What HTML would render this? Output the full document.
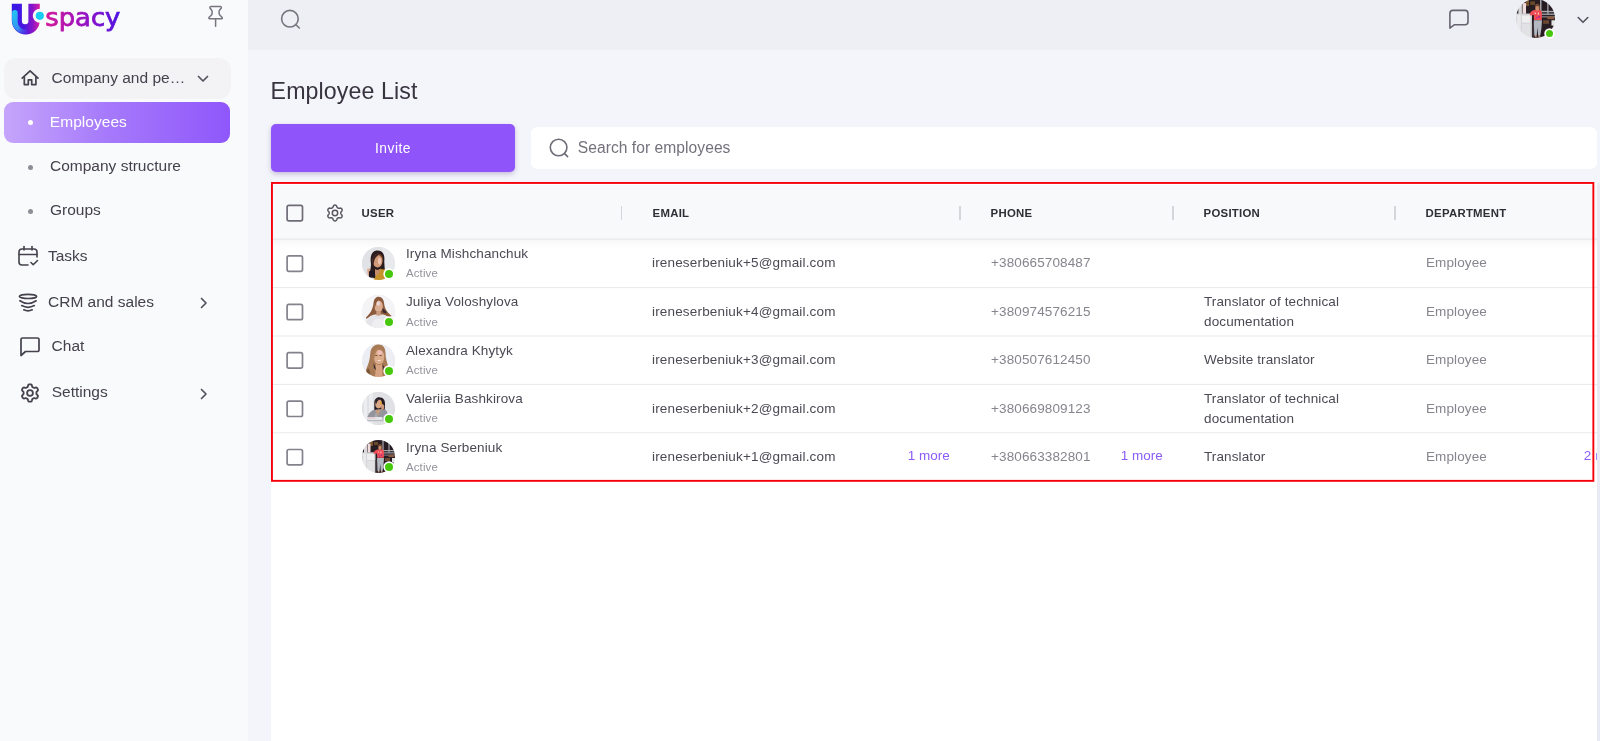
<!DOCTYPE html>
<html lang="en">
<head>
<meta charset="utf-8">
<title>Employee List</title>
<style>
*{box-sizing:border-box;margin:0;padding:0}
html,body{width:1600px;height:741px;overflow:hidden}
html{background:#f4f5fa}body{font-family:"Liberation Sans",Arial,sans-serif;background:#f4f5fa;color:#33333b;position:relative;will-change:transform}
.abs{position:absolute}
#side{position:absolute;left:0;top:0;width:247.5px;height:741px;background:#f9fafc}
#top{position:absolute;left:247.500px;top:0;width:1352.500px;height:50px;background:#eeeff4}
.nav{position:absolute;font-size:15.5px;line-height:20px;color:#45414d;white-space:nowrap;}
#grp{position:absolute;left:4px;top:57.7px;width:226.500px;height:41px;border-radius:12px;background:#f3f3f6}
#act{position:absolute;left:4px;top:102px;width:226px;height:41px;border-radius:9px;background:linear-gradient(90deg,#c5a5fb 0%,#a67afb 45%,#8f57fb 100%)}
.dot{position:absolute;left:27.6px;width:5px;height:5px;border-radius:50%;background:#8d8d95}
h1{position:absolute;left:270.6px;top:77.2px;font-size:23.2px;font-weight:400;color:#37333f;line-height:28px;letter-spacing:.1px}
#invite{position:absolute;left:270.8px;top:123.5px;width:244.4px;height:48.3px;border-radius:5px;background:#8f55fb;box-shadow:0 2px 5px rgba(70,40,140,.28);color:#fff;font-size:13.8px;text-align:center;line-height:50.9px;letter-spacing:.5px}
#search{position:absolute;left:530.6px;top:126.9px;width:1066.4px;height:42px;border-radius:6.5px;background:#fff}
#search span{position:absolute;left:47.2px;top:11.2px;font-size:15.6px;color:#74717c;line-height:20px;letter-spacing:.05px}
#panel{position:absolute;left:271px;top:183px;width:1326px;height:558px;background:#fff}
#thead{position:absolute;left:271px;top:185px;width:1326px;height:54px;background:#f8f9fb}#thsh{position:absolute;left:271px;top:239px;width:1326px;height:10px;background:linear-gradient(180deg,rgba(40,40,80,.045),rgba(40,40,80,.02) 45%,rgba(40,40,80,0))}
#red{position:absolute;left:271px;top:182px;width:1323.3px;height:299.5px;border:2px solid #f5000b}
.th{position:absolute;top:205.9px;font-size:11.4px;font-weight:700;color:#2e2e36;line-height:14px;letter-spacing:.25px;margin-left:-.4px}
.sep{position:absolute;top:206px;width:1.4px;height:13.7px;background:#d6d5db}
.row{position:absolute;left:271px;width:1326px;height:1px;background:#e9eaee}
.cb{position:absolute;left:286.2px;width:17.2px;height:17.2px;border:2px solid #7a7783;border-radius:2.5px;background:#fff}
.e{letter-spacing:.17px!important}.t{position:absolute;font-size:13.5px;line-height:16px;color:#4a4a54;white-space:nowrap;letter-spacing:.12px}
.g{color:#85858e}
.s{font-size:11.4px;color:#94929b;letter-spacing:.15px}
.p{color:#8b5cf6;letter-spacing:0;margin-left:-.3px}
.av{position:absolute;left:361.5px;border-radius:50%;overflow:hidden;background:#e4e4e8}
.on{position:absolute;left:384.6px;width:8.2px;height:8.2px;border-radius:50%;background:#47c70c;box-shadow:0 0 0 1.7px #fff}
</style>
</head>
<body>
<div id="side"></div>
<div id="top"></div>
<div id="grp"></div>
<div id="act"></div>

<!-- LOGO -->
<svg class="abs" style="left:0;top:0" width="130" height="40" viewBox="0 0 130 40">
<defs>
<linearGradient id="lg1" x1="0" y1="0" x2="1" y2="0"><stop offset="0" stop-color="#3418e6"/><stop offset=".45" stop-color="#4a16e0"/><stop offset=".75" stop-color="#8a16c8"/><stop offset="1" stop-color="#dc22a0"/></linearGradient>
<linearGradient id="lg2" x1="0" y1="0" x2="1" y2="0"><stop offset="0" stop-color="#d4189a"/><stop offset=".5" stop-color="#9a12c0"/><stop offset="1" stop-color="#4c12e4"/></linearGradient>
<linearGradient id="lg3" x1="0" y1="0" x2="1" y2="1"><stop offset="0" stop-color="#1fd0f4"/><stop offset=".6" stop-color="#3a8af0"/><stop offset="1" stop-color="#5a3ae6" stop-opacity=".2"/></linearGradient>
<filter id="bl" x="-10%" y="-10%" width="120%" height="120%"><feGaussianBlur stdDeviation=".45"/></filter>
</defs>
<path d="M11.800 3.800 H21.900 V21 a3.250 3.250 0 0 0 6.500 0 V3.800 H39.800 V20.500 a14 14 0 0 1 -28 0 Z" fill="url(#lg1)"/>
<path d="M12.100 12.800 a2.800 2.800 0 0 1 5.600 0 V21.500 a8 8 0 0 0 9.300 8 V34.300 a14 14 0 0 1 -14.900 -13.800 Z" fill="url(#lg3)"/>
<circle cx="39.800" cy="15.800" r="7" fill="#f9fafc"/>
<circle cx="39.800" cy="15.800" r="4.100" fill="#18ccf2"/>
<text x="45.300" y="26.400" font-family="'DejaVu Sans','Liberation Sans',sans-serif" font-size="24" fill="url(#lg2)" stroke="url(#lg2)" stroke-width=".75" textLength="75" lengthAdjust="spacingAndGlyphs">spacy</text>
</svg>
<!-- pin -->
<svg class="abs" style="left:205px;top:4px" width="22" height="26" viewBox="0 0 22 26" fill="none" stroke="#77747f" stroke-width="1.5" stroke-linejoin="round" stroke-linecap="round"><path d="M6 2.600 H15.200 Q16.600 2.600 16.300 3.800 C15.600 5.200 14.300 6 14.100 7.400 V9.600 C14.300 11.300 16.200 12.200 17.200 13.500 Q17.700 14.700 16.600 14.700 H4.600 Q3.500 14.700 4 13.500 C5 12.200 6.900 11.300 7.100 9.600 V7.400 C6.900 6 5.600 5.200 4.900 3.800 Q4.600 2.600 6 2.600 Z"/><path d="M10.600 14.900 V22.200"/></svg>

<!-- NAV -->
<svg class="abs" style="left:20px;top:68px" width="20" height="20" viewBox="0 0 20 20" fill="none" stroke="#45414d" stroke-width="1.7" stroke-linejoin="round" stroke-linecap="round"><path d="M2.200 10.100 L10.100 2.800 L18 10.100"/><path d="M4.300 9 V16.600 H8.300 V11.800 H11.700 V16.600 H15.900 V9"/></svg>
<div class="nav" style="left:51.6px;top:68px">Company and pe…</div>
<svg class="abs" style="left:196.2px;top:72.7px" width="14" height="12" viewBox="0 0 14 12" fill="none" stroke="#55525e" stroke-width="1.7" stroke-linecap="round" stroke-linejoin="round"><path d="M2.5 3.5 L7 8 L11.5 3.5"/></svg>

<div class="dot" style="top:120px;background:#fff"></div>
<div class="nav" style="left:49.800px;top:112.300px;color:#fff;letter-spacing:.05px">Employees</div>
<div class="dot" style="top:164.5px"></div>
<div class="nav" style="left:50px;top:156px">Company structure</div>
<div class="dot" style="top:209px"></div>
<div class="nav" style="left:50px;top:200.2px">Groups</div>

<svg class="abs" style="left:17px;top:245.4px" width="22" height="22" viewBox="0 0 22 22" fill="none" stroke="#45414d" stroke-width="1.6" stroke-linecap="round" stroke-linejoin="round"><path d="M11 20 H5 a3 3 0 0 1 -3 -3 V7 a3 3 0 0 1 3 -3 H17 a3 3 0 0 1 3 3 V12"/><path d="M2 9.5 H20"/><path d="M7 1.5 V5"/><path d="M15 1.5 V5"/><path d="M14 17.5 L16.2 19.7 L20.5 15.5"/></svg>
<div class="nav" style="left:48px;top:245.5px">Tasks</div>

<svg class="abs" style="left:17px;top:291px" width="22" height="22" viewBox="0 0 22 22" fill="none" stroke="#45414d" stroke-width="1.7" stroke-linecap="round" stroke-linejoin="round"><ellipse cx="11" cy="5.4" rx="8.6" ry="2.1"/><path d="M2.900 9.800 Q11 15.200 19.100 9.800"/><path d="M4.700 14.600 Q11 18 17.300 14.600"/><path d="M6.800 18.800 Q11 20.800 15.200 18.800"/></svg>
<div class="nav" style="left:48px;top:291.8px">CRM and sales</div>
<svg class="abs" style="left:197.600px;top:295.500px" width="12" height="14" viewBox="0 0 12 14" fill="none" stroke="#55525e" stroke-width="1.7" stroke-linecap="round" stroke-linejoin="round"><path d="M3.5 2.5 L8 7 L3.5 11.5"/></svg>

<svg class="abs" style="left:19px;top:336px" width="22" height="22" viewBox="0 0 22 22" fill="none" stroke="#45414d" stroke-width="1.7" stroke-linecap="round" stroke-linejoin="round"><path d="M2 3.5 a1.5 1.5 0 0 1 1.500 -1.500 H18.500 a1.500 1.500 0 0 1 1.500 1.500 V14 a1.500 1.500 0 0 1 -1.500 1.500 H6.500 L2 19.500 Z"/></svg>
<div class="nav" style="left:51.6px;top:336.3px">Chat</div>

<svg class="abs" style="left:19.95px;top:383.25px" width="20" height="20" viewBox="0 0 20 20" fill="none" stroke="#45414d" stroke-width="1.8" stroke-linejoin="round"><path d="M16.40 10.00 L16.40 9.72 L16.40 9.44 L16.42 9.16 L16.51 8.85 L16.78 8.50 L17.29 8.05 L17.78 7.55 L17.98 7.10 L17.97 6.70 L17.86 6.33 L17.71 5.98 L17.53 5.65 L17.33 5.33 L17.11 5.02 L16.85 4.75 L16.51 4.54 L16.01 4.49 L15.34 4.66 L14.69 4.88 L14.25 4.94 L13.94 4.87 L13.68 4.74 L13.44 4.60 L13.20 4.46 L12.96 4.32 L12.71 4.18 L12.48 4.02 L12.26 3.79 L12.09 3.38 L11.95 2.71 L11.77 2.04 L11.47 1.64 L11.13 1.45 L10.76 1.36 L10.38 1.31 L10.00 1.30 L9.62 1.31 L9.24 1.36 L8.87 1.45 L8.53 1.64 L8.23 2.04 L8.05 2.71 L7.91 3.38 L7.74 3.79 L7.52 4.02 L7.29 4.18 L7.04 4.32 L6.80 4.46 L6.56 4.60 L6.32 4.74 L6.06 4.87 L5.75 4.94 L5.31 4.88 L4.66 4.66 L3.99 4.49 L3.49 4.54 L3.15 4.75 L2.89 5.02 L2.67 5.33 L2.47 5.65 L2.29 5.98 L2.14 6.33 L2.03 6.70 L2.02 7.10 L2.22 7.55 L2.71 8.05 L3.22 8.50 L3.49 8.85 L3.58 9.16 L3.60 9.44 L3.60 9.72 L3.60 10.00 L3.60 10.28 L3.60 10.56 L3.58 10.84 L3.49 11.15 L3.22 11.50 L2.71 11.95 L2.22 12.45 L2.02 12.90 L2.03 13.30 L2.14 13.67 L2.29 14.02 L2.47 14.35 L2.67 14.67 L2.89 14.98 L3.15 15.25 L3.49 15.46 L3.99 15.51 L4.66 15.34 L5.31 15.12 L5.75 15.06 L6.06 15.13 L6.32 15.26 L6.56 15.40 L6.80 15.54 L7.04 15.68 L7.29 15.82 L7.52 15.98 L7.74 16.21 L7.91 16.62 L8.05 17.29 L8.23 17.96 L8.53 18.36 L8.87 18.55 L9.24 18.64 L9.62 18.69 L10.00 18.70 L10.38 18.69 L10.76 18.64 L11.13 18.55 L11.47 18.36 L11.77 17.96 L11.95 17.29 L12.09 16.62 L12.26 16.21 L12.48 15.98 L12.71 15.82 L12.96 15.68 L13.20 15.54 L13.44 15.40 L13.68 15.26 L13.94 15.13 L14.25 15.06 L14.69 15.12 L15.34 15.34 L16.01 15.51 L16.51 15.46 L16.85 15.25 L17.11 14.98 L17.33 14.67 L17.53 14.35 L17.71 14.02 L17.86 13.67 L17.97 13.30 L17.98 12.90 L17.78 12.45 L17.29 11.95 L16.78 11.50 L16.51 11.15 L16.42 10.84 L16.40 10.56 L16.40 10.28Z"/><circle cx="10" cy="10" r="2.9"/></svg>
<div class="nav" style="left:51.7px;top:382.3px">Settings</div>
<svg class="abs" style="left:197.600px;top:386.500px" width="12" height="14" viewBox="0 0 12 14" fill="none" stroke="#55525e" stroke-width="1.7" stroke-linecap="round" stroke-linejoin="round"><path d="M3.5 2.5 L8 7 L3.5 11.5"/></svg>

<!-- TOPBAR -->
<svg class="abs" style="left:279px;top:8px" width="24" height="24" viewBox="0 0 24 24" fill="none" stroke="#77747f" stroke-width="1.600" stroke-linecap="round"><circle cx="10.900" cy="10.700" r="8.300"/><path d="M16.900 16.700 L20.300 20"/></svg>
<svg class="abs" style="left:1448px;top:8px" width="23" height="23" viewBox="0 0 23 23" fill="none" stroke="#67646f" stroke-width="1.600" stroke-linecap="round" stroke-linejoin="round"><path d="M1.900 5.400 a3 3 0 0 1 3 -3 H17 a3 3 0 0 1 3 3 V13.700 a3 3 0 0 1 -3 3 H6.500 L1.900 20.100 Z"/></svg>
<svg class="abs" style="left:1515.9px;top:-.7px;border-radius:50%" width="39" height="39" viewBox="0 0 33 33"><g filter="url(#bl)"><rect width="33" height="33" fill="#251b22"/><rect x="8" y="1" width="3" height="5" fill="#7a5230"/><rect x="12" y="2" width="4" height="3" fill="#6b4a2c"/><rect x="20.500" y="0" width="1" height="13" fill="#c9c9ce"/><rect x="26.500" y="3" width="1" height="10" fill="#b9b9be"/><rect x="21" y="10" width="12" height="1.200" fill="#a9a9b0"/><rect x="21" y="12.300" width="12" height="1.200" fill="#9a9aa2"/><rect x="21" y="14.600" width="12" height="1" fill="#8a8a92"/><rect x="26.400" y="14.700" width="6" height="2.400" fill="#8a5a40"/><rect x="23" y="18" width="5" height="3" fill="#6b4a30"/><rect x="30" y="18" width="3" height="4.500" fill="#e4e4e6"/><path d="M0 12.300 L13.500 12.300 L13.500 33 L0 33Z" fill="#d5d6d9"/><rect x="1" y="13.500" width="3" height="19" fill="#e9e9ec"/><rect x="5" y="14" width="7" height="6" fill="#eeeeef"/><rect x="5" y="21" width="7" height="11" fill="#e2e2e5"/><rect x="2" y="5" width="3" height="8" fill="#d9d9dd"/><rect x="5.500" y="3.500" width="3" height="9" fill="#f0dcdc"/><rect x="13.500" y="20" width="2" height="13" fill="#3a3038"/><path d="M15 18 L22 18 L21.500 25 L20.500 31 L18.700 31 L18.300 24 L17.500 31 L15.500 31Z" fill="#b4b8c0"/><path d="M11.500 12.500 C13 10 15 9.200 17 9.200 L20 9.200 C21.500 9.500 22 11 22 13 L21.800 17.800 L15.300 17.800 L15 13.500 L12 14Z" fill="#ef4d55"/><ellipse cx="18" cy="7.300" rx="1.900" ry="2.500" fill="#c9916f"/><path d="M16 7.500 C15.800 4.500 17 4 18.200 4 C19.800 4 20.300 5.500 20.200 8.500 L19.600 10 L19.300 6.500 C18.500 5.800 17.300 5.800 16.600 6.500 L16.500 10Z" fill="#7a4a35"/><rect x="16" y="31" width="1.500" height="1.500" fill="#c9916f"/><rect x="19" y="31" width="1.500" height="1.500" fill="#c9916f"/><circle cx="17.700" cy="15.800" r=".6" fill="#b010d0"/><circle cx="19.500" cy="15" r=".6" fill="#8a10c0"/><circle cx="16.300" cy="12" r=".5" fill="#fff"/><rect x="18.500" y="11.500" width=".8" height="1.800" fill="#fbd9d9"/></g></svg>
<div class="abs" style="left:1545.5px;top:29.8px;width:7.4px;height:7.4px;border-radius:50%;background:#47c70c;box-shadow:0 0 0 1.7px #fff"></div>
<svg class="abs" style="left:1575.750px;top:13.750px" width="14" height="12" viewBox="0 0 14 12" fill="none" stroke="#55525e" stroke-width="1.600" stroke-linecap="round" stroke-linejoin="round"><path d="M2.200 3.500 L7 8.300 L11.800 3.500"/></svg>

<!-- CONTENT -->
<h1>Employee List</h1>
<div id="invite">Invite</div>
<div id="search"><svg class="abs" style="left:17px;top:10px" width="22" height="22" viewBox="0 0 22 22" fill="none" stroke="#6f6c78" stroke-width="1.6" stroke-linecap="round"><circle cx="10.6" cy="10.5" r="8.3"/><path d="M16.6 16.6 L19.6 19.6"/></svg><span>Search for employees</span></div>
<div id="panel"></div><div id="thead"></div><div id="thsh"></div>
<div class="th" style="left:362px">USER</div>
<div class="th" style="left:653px">EMAIL</div>
<div class="th" style="left:991px">PHONE</div>
<div class="th" style="left:1204px">POSITION</div>
<div class="th" style="left:1426px">DEPARTMENT</div>
<div class="sep" style="left:620.7px"></div>
<div class="sep" style="left:959.3px"></div>
<div class="sep" style="left:1172.3px"></div>
<div class="sep" style="left:1394.3px"></div>
<svg class="abs" style="left:324.5px;top:203.2px" width="20" height="20" viewBox="0 0 20 20" fill="none" stroke="#5a5661" stroke-width="1.5" stroke-linejoin="round"><path d="M15.80 10.00 L15.81 9.75 L15.84 9.49 L15.91 9.22 L16.06 8.93 L16.30 8.60 L16.62 8.23 L16.91 7.82 L17.09 7.42 L17.15 7.04 L17.10 6.69 L16.99 6.36 L16.84 6.05 L16.65 5.76 L16.42 5.51 L16.14 5.29 L15.78 5.15 L15.34 5.11 L14.84 5.16 L14.36 5.24 L13.96 5.29 L13.63 5.27 L13.36 5.20 L13.12 5.10 L12.90 4.98 L12.68 4.84 L12.48 4.69 L12.28 4.49 L12.10 4.22 L11.94 3.84 L11.77 3.38 L11.57 2.93 L11.31 2.57 L11.01 2.33 L10.68 2.19 L10.34 2.12 L10.00 2.10 L9.66 2.12 L9.32 2.19 L8.99 2.33 L8.69 2.57 L8.43 2.93 L8.23 3.38 L8.06 3.84 L7.90 4.22 L7.72 4.49 L7.52 4.69 L7.32 4.84 L7.10 4.98 L6.88 5.10 L6.64 5.20 L6.37 5.27 L6.04 5.29 L5.64 5.24 L5.16 5.16 L4.66 5.11 L4.22 5.15 L3.86 5.29 L3.58 5.51 L3.35 5.76 L3.16 6.05 L3.01 6.36 L2.90 6.69 L2.85 7.04 L2.91 7.42 L3.09 7.82 L3.38 8.23 L3.70 8.60 L3.94 8.93 L4.09 9.22 L4.16 9.49 L4.19 9.75 L4.20 10.00 L4.19 10.25 L4.16 10.51 L4.09 10.78 L3.94 11.07 L3.70 11.40 L3.38 11.77 L3.09 12.18 L2.91 12.58 L2.85 12.96 L2.90 13.31 L3.01 13.64 L3.16 13.95 L3.35 14.24 L3.58 14.49 L3.86 14.71 L4.22 14.85 L4.66 14.89 L5.16 14.84 L5.64 14.76 L6.04 14.71 L6.37 14.73 L6.64 14.80 L6.88 14.90 L7.10 15.02 L7.32 15.16 L7.52 15.31 L7.72 15.51 L7.90 15.78 L8.06 16.16 L8.23 16.62 L8.43 17.07 L8.69 17.43 L8.99 17.67 L9.32 17.81 L9.66 17.88 L10.00 17.90 L10.34 17.88 L10.68 17.81 L11.01 17.67 L11.31 17.43 L11.57 17.07 L11.77 16.62 L11.94 16.16 L12.10 15.78 L12.28 15.51 L12.48 15.31 L12.68 15.16 L12.90 15.02 L13.12 14.90 L13.36 14.80 L13.63 14.73 L13.96 14.71 L14.36 14.76 L14.84 14.84 L15.34 14.89 L15.78 14.85 L16.14 14.71 L16.42 14.49 L16.65 14.24 L16.84 13.95 L16.99 13.64 L17.10 13.31 L17.15 12.96 L17.09 12.58 L16.91 12.18 L16.62 11.77 L16.30 11.40 L16.06 11.07 L15.91 10.78 L15.84 10.51 L15.81 10.25Z"/><circle cx="10" cy="10" r="2.7"/></svg>
<svg class="av" style="top:246.7px" width="33" height="33" viewBox="0 0 33 33"><g filter="url(#bl)"><rect width="33" height="33" fill="#e0e2e6"/><rect x="20" width="13" height="33" fill="#e8e9ec"/><path d="M5 22 L8 21.500 L8 29 L6 29Z" fill="#d9a98c"/><path d="M18.700 21 L22.600 21 L23 33 L11 33Z" fill="#c8922a"/><path d="M9 17 C7.500 8 10.500 3.500 15.500 3.500 C21 3.500 23 8 22.300 14 C22.300 18 23 21 22.500 22.500 L18 22 C15 24 13.500 27 13 31 L7.500 30 C7 26 9 22 9 17Z" fill="#2a1a1e"/><ellipse cx="15.600" cy="13.600" rx="5" ry="6.800" fill="#d19a78"/><path d="M10.500 13 C10.500 7 15 5.500 19.500 7 C17 7.500 14 9 12.500 13 C12 15 11.500 17 11 19Z" fill="#3a2420"/><path d="M16 7.500 C19 6.500 21.500 9 21 14 C20.500 11 19 9 16 7.500Z" fill="#6b4228"/><ellipse cx="17.500" cy="14" rx="1.500" ry="3.500" fill="#edc4b4"/><path d="M13 22 C15 23.500 17.500 23 18.700 21 L17 27 L13 28Z" fill="#c48b68"/><rect x="7" y="24" width="6" height="6.500" rx="1" fill="#241820"/></g></svg>
<div class="on" style="top:269.7px"></div>
<div class="t" style="left:406px;top:245.9px">Iryna Mishchanchuk</div>
<div class="t s" style="left:406px;top:265.25px">Active</div>
<div class="t e" style="left:652px;top:255.3px">ireneserbeniuk+5@gmail.com</div>
<div class="t g" style="left:991px;top:255.3px">+380665708487</div>
<div class="t g" style="left:1426px;top:255.3px">Employee</div>
<svg class="av" style="top:295.1px" width="33" height="33" viewBox="0 0 33 33"><g filter="url(#bl)"><rect width="33" height="33" fill="#f4f4f6"/><path d="M2 33 C3 24 9 20 16.500 19.500 C24 20 29 23 30 33Z" fill="#e4e4e9"/><path d="M10 33 C9 27 12 24 16 24 C20 24 24 27 23 33Z" fill="#efeff2"/><path d="M11.500 8 C12 3.500 14.500 1.800 16.500 1.800 C20 1.800 22 5 22.200 9 C22.500 14 26 18 29.600 21 L27 22.500 C24 20 21 19 20 19.500 L13 19.500 C10 19.500 7 22 4.500 24 L4 22.500 C8 19 11 14 11.500 8Z" fill="#8b5a3c"/><path d="M20.500 13.500 C22 14 24 16 24.700 18 C23 18.500 21 18 20.500 16.500Z" fill="#3a2530"/><ellipse cx="16.500" cy="11.200" rx="4.300" ry="5.800" fill="#dcae94"/><path d="M12.300 10 C12.300 5.500 15 4 17 4 C15.500 6 14 8 13.500 11 L12.500 14Z" fill="#8b5a3c"/><ellipse cx="16.300" cy="8.500" rx="1.800" ry="2.300" fill="#ecd6d2"/><path d="M14.500 16 L18.500 16 L19 20 C17.500 21 15.500 21 14 20Z" fill="#c99a80"/></g></svg>
<div class="on" style="top:318.1px"></div>
<div class="t" style="left:406px;top:294.3px">Juliya Voloshylova</div>
<div class="t s" style="left:406px;top:313.65px">Active</div>
<div class="t e" style="left:652px;top:303.7px">ireneserbeniuk+4@gmail.com</div>
<div class="t g" style="left:991px;top:303.7px">+380974576215</div>
<div class="t" style="left:1204px;top:293.7px">Translator of technical</div>
<div class="t" style="left:1204px;top:313.7px">documentation</div>
<div class="t g" style="left:1426px;top:303.7px">Employee</div>
<svg class="av" style="top:343.5px" width="33" height="33" viewBox="0 0 33 33"><g filter="url(#bl)"><rect width="33" height="33" fill="#eceef3"/><path d="M8.300 9 C9 3 13 .600 16.500 .600 C21 .600 23.500 4 23.500 9 C23.500 14 25 18 26 22 C26.500 26 25 30 23 33 L5 33 C2.500 29 4 26 5.500 22 C7.500 17 8 13 8.300 9Z" fill="#a87a54"/><path d="M6 24 C8 26 9 30 8 33 L5 33 C3.500 30 4.500 27 6 24Z" fill="#7c5436"/><ellipse cx="17" cy="13" rx="5.300" ry="7.300" fill="#dcab8c"/><path d="M11.700 12 C11.500 6 15 3.500 18 4 C15.500 5.500 13.500 8 13 12 L12 16Z" fill="#b08259"/><ellipse cx="17.800" cy="8.500" rx="2.500" ry="2.200" fill="#f0bcb8"/><path d="M14 19.500 C16 21.500 18.500 21.500 20 19.500 L20.500 33 L13 33Z" fill="#d6a282"/><path d="M11.500 19 C12.500 21 13.500 23 14 26 L12 24Z" fill="#33202a"/><path d="M20.500 20 L21 27 L22.500 23Z" fill="#4a3030"/><path d="M14.800 16 C16 17.300 18.300 17.300 19.500 15.800 C18.500 16.300 16 16.500 14.800 16Z" fill="#fff"/><rect x="13.200" y="11" width="2.200" height="1" fill="#7a5238"/><rect x="17.500" y="11" width="2.200" height="1" fill="#7a5238"/></g></svg>
<div class="on" style="top:366.5px"></div>
<div class="t" style="left:406px;top:342.7px">Alexandra Khytyk</div>
<div class="t s" style="left:406px;top:362.05px">Active</div>
<div class="t e" style="left:652px;top:352.1px">ireneserbeniuk+3@gmail.com</div>
<div class="t g" style="left:991px;top:352.1px">+380507612450</div>
<div class="t" style="left:1204px;top:352.1px">Website translator</div>
<div class="t g" style="left:1426px;top:352.1px">Employee</div>
<svg class="av" style="top:391.9px" width="33" height="33" viewBox="0 0 33 33"><g filter="url(#bl)"><rect width="33" height="33" fill="#dfe1e4"/><rect x="2" width="3" height="33" fill="#eceef1"/><rect x="7" width="4" height="33" fill="#eaecef"/><path d="M5 27 C6 21 10 17.500 15 17 L22 17 C25 18 26 21 26.500 27 L24 29 L6 29Z" fill="#94959c"/><path d="M13 17.500 L16 24 L19 17.500Z" fill="#c79b80"/><path d="M14 20 L17 28 L11 28Z" fill="#a9aab1"/><path d="M12.300 12 C12 7.500 14.500 5.300 17 5.300 C21 5.300 23.500 8 23 13 C23 15.500 23 17 22 18 L19.500 17 L14.500 17.500 L12.500 18 C12 16 12.500 14 12.300 12Z" fill="#231c24"/><ellipse cx="16.600" cy="11.800" rx="3.300" ry="4.600" fill="#d9a888"/><path d="M13.300 10.500 C13.500 7.500 16 6.500 18.500 7 C16.500 8 15 9 14.300 12Z" fill="#231c24"/><path d="M19 12.500 C20.500 11.500 22 12.500 22.300 14.500 L21.500 18 L19.300 17.500Z" fill="#cf9c7c"/><rect x="18.200" y="9.500" width="1.500" height="3" rx=".5" fill="#e0a020"/><rect x="5" y="25" width="15.500" height="3.500" fill="#e4e4e8"/><rect x="5.500" y="25.300" width="8" height="1.300" fill="#e8c8cc"/><rect x="5" y="28" width="20" height="1.200" fill="#b9bac0"/></g></svg>
<div class="on" style="top:414.9px"></div>
<div class="t" style="left:406px;top:391.1px">Valeriia Bashkirova</div>
<div class="t s" style="left:406px;top:410.45px">Active</div>
<div class="t e" style="left:652px;top:400.5px">ireneserbeniuk+2@gmail.com</div>
<div class="t g" style="left:991px;top:400.5px">+380669809123</div>
<div class="t" style="left:1204px;top:390.5px">Translator of technical</div>
<div class="t" style="left:1204px;top:410.5px">documentation</div>
<div class="t g" style="left:1426px;top:400.5px">Employee</div>
<svg class="av" style="top:440.3px" width="33" height="33" viewBox="0 0 33 33"><g filter="url(#bl)"><rect width="33" height="33" fill="#251b22"/><rect x="8" y="1" width="3" height="5" fill="#7a5230"/><rect x="12" y="2" width="4" height="3" fill="#6b4a2c"/><rect x="20.500" y="0" width="1" height="13" fill="#c9c9ce"/><rect x="26.500" y="3" width="1" height="10" fill="#b9b9be"/><rect x="21" y="10" width="12" height="1.200" fill="#a9a9b0"/><rect x="21" y="12.300" width="12" height="1.200" fill="#9a9aa2"/><rect x="21" y="14.600" width="12" height="1" fill="#8a8a92"/><rect x="26.400" y="14.700" width="6" height="2.400" fill="#8a5a40"/><rect x="23" y="18" width="5" height="3" fill="#6b4a30"/><rect x="30" y="18" width="3" height="4.500" fill="#e4e4e6"/><path d="M0 12.300 L13.500 12.300 L13.500 33 L0 33Z" fill="#d5d6d9"/><rect x="1" y="13.500" width="3" height="19" fill="#e9e9ec"/><rect x="5" y="14" width="7" height="6" fill="#eeeeef"/><rect x="5" y="21" width="7" height="11" fill="#e2e2e5"/><rect x="2" y="5" width="3" height="8" fill="#d9d9dd"/><rect x="5.500" y="3.500" width="3" height="9" fill="#f0dcdc"/><rect x="13.500" y="20" width="2" height="13" fill="#3a3038"/><path d="M15 18 L22 18 L21.500 25 L20.500 31 L18.700 31 L18.300 24 L17.500 31 L15.500 31Z" fill="#b4b8c0"/><path d="M11.500 12.500 C13 10 15 9.200 17 9.200 L20 9.200 C21.500 9.500 22 11 22 13 L21.800 17.800 L15.300 17.800 L15 13.500 L12 14Z" fill="#ef4d55"/><ellipse cx="18" cy="7.300" rx="1.900" ry="2.500" fill="#c9916f"/><path d="M16 7.500 C15.800 4.500 17 4 18.200 4 C19.800 4 20.300 5.500 20.200 8.500 L19.600 10 L19.300 6.500 C18.500 5.800 17.300 5.800 16.600 6.500 L16.500 10Z" fill="#7a4a35"/><rect x="16" y="31" width="1.500" height="1.500" fill="#c9916f"/><rect x="19" y="31" width="1.500" height="1.500" fill="#c9916f"/><circle cx="17.700" cy="15.800" r=".6" fill="#b010d0"/><circle cx="19.500" cy="15" r=".6" fill="#8a10c0"/><circle cx="16.300" cy="12" r=".5" fill="#fff"/><rect x="18.500" y="11.500" width=".8" height="1.800" fill="#fbd9d9"/></g></svg>
<div class="on" style="top:463.3px"></div>
<div class="t" style="left:406px;top:439.5px">Iryna Serbeniuk</div>
<div class="t s" style="left:406px;top:458.85px">Active</div>
<div class="t e" style="left:652px;top:448.9px">ireneserbeniuk+1@gmail.com</div>
<div class="t g" style="left:991px;top:448.9px">+380663382801</div>
<div class="t" style="left:1204px;top:448.9px">Translator</div>
<div class="t g" style="left:1426px;top:448.9px">Employee</div>
<div class="t p" style="left:908px;top:447.9px">1 more</div>
<div class="t p" style="left:1121px;top:447.9px">1 more</div>
<div class="t p" style="left:1584px;top:447.9px;width:8px;overflow:hidden">2</div>
<div class="abs" style="left:1595.6px;top:453.0px;width:1.2px;height:7px;background:#a585f8"></div>
<svg class="abs" style="left:0;top:0" width="1600" height="500"><path d="M271 239.100 H1597" stroke="#e4e4e9" stroke-width=".9"/><path d="M271 287.60 H1597" stroke="#e9e9ed" stroke-width="1"/><path d="M271 336.00 H1597" stroke="#e9e9ed" stroke-width="1"/><path d="M271 384.40 H1597" stroke="#e9e9ed" stroke-width="1"/><path d="M271 432.80 H1597" stroke="#e9e9ed" stroke-width="1"/><rect x="287.10" y="205.45" width="15.400" height="15.400" rx="1.800" fill="none" stroke="#6f6b77" stroke-width="1.700"/><rect x="287.10" y="255.90" width="15.400" height="15.400" rx="1.800" fill="#fff" stroke="#84818c" stroke-width="1.700"/><rect x="287.10" y="304.30" width="15.400" height="15.400" rx="1.800" fill="#fff" stroke="#84818c" stroke-width="1.700"/><rect x="287.10" y="352.70" width="15.400" height="15.400" rx="1.800" fill="#fff" stroke="#84818c" stroke-width="1.700"/><rect x="287.10" y="401.10" width="15.400" height="15.400" rx="1.800" fill="#fff" stroke="#84818c" stroke-width="1.700"/><rect x="287.10" y="449.50" width="15.400" height="15.400" rx="1.800" fill="#fff" stroke="#84818c" stroke-width="1.700"/><rect x="271.95" y="182.95" width="1321.4" height="297.9" fill="none" stroke="#f5000b" stroke-width="1.9"/></svg>
<div class="abs" style="left:1597px;top:183px;width:3px;height:558px;background:#e9eaf3"></div>
</body>
</html>
